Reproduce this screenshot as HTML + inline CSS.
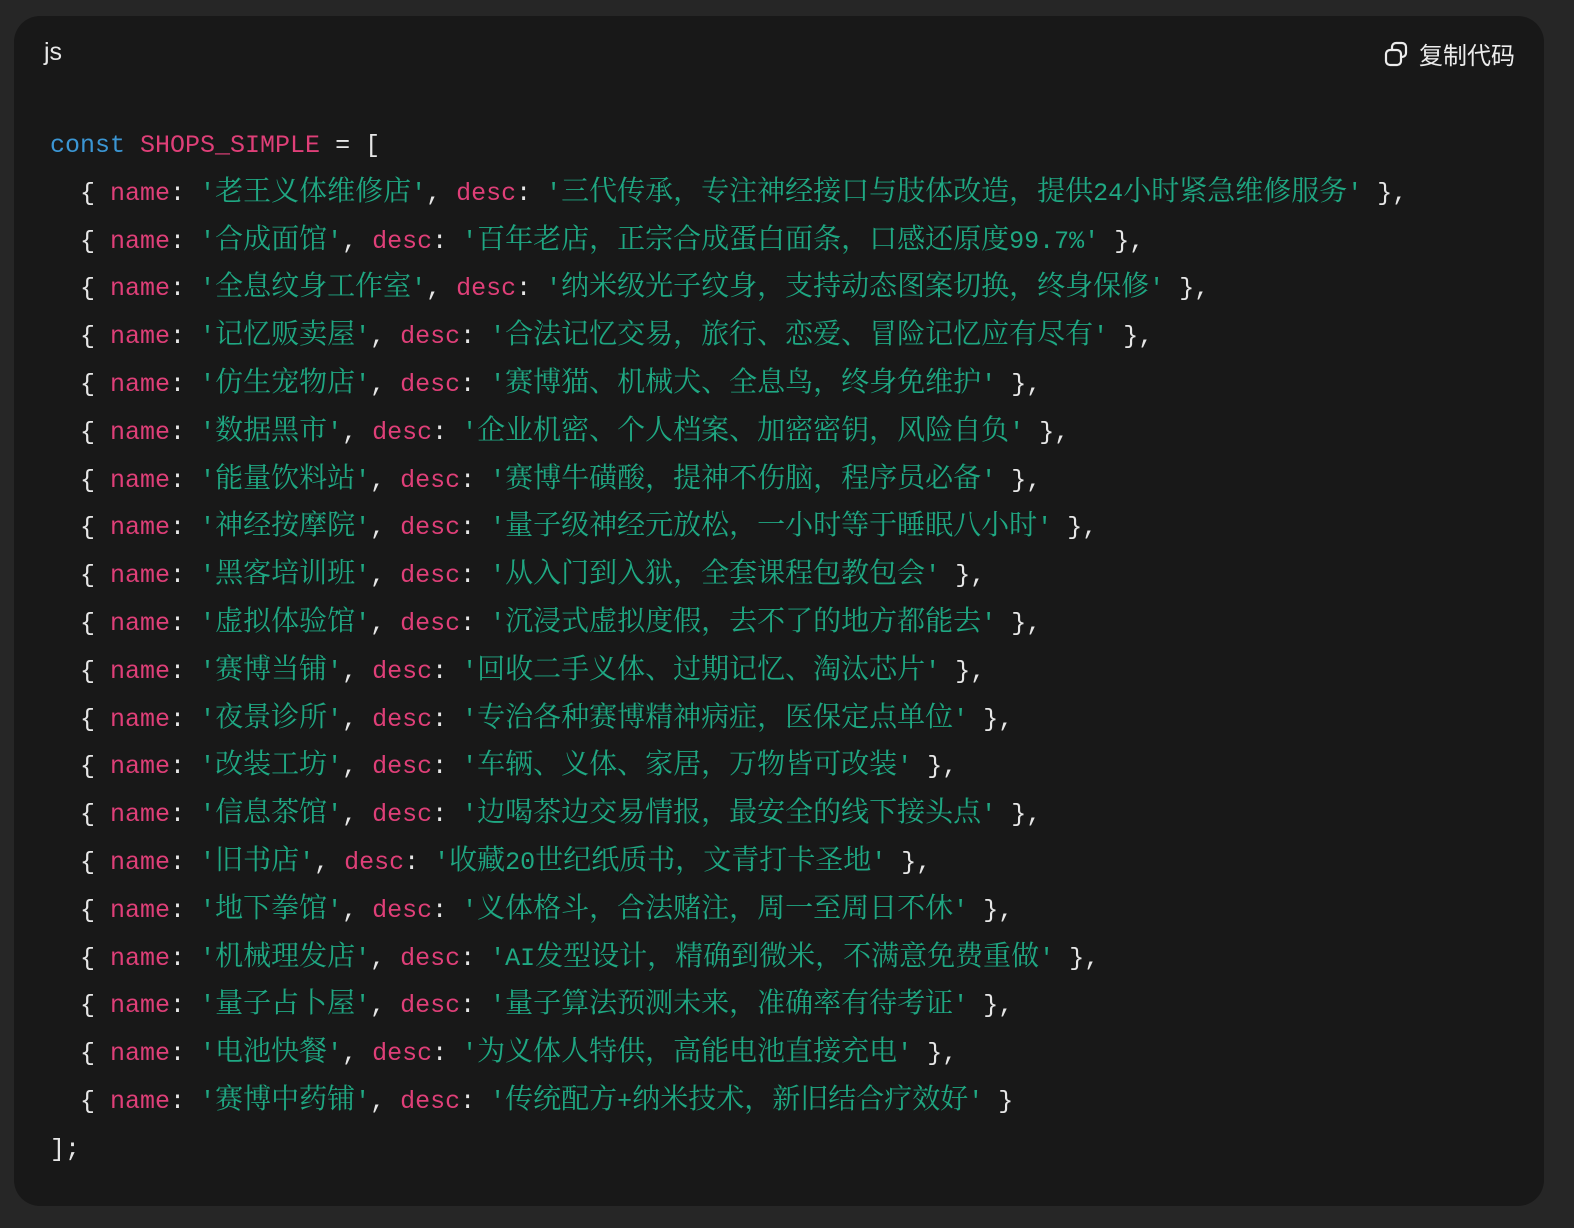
<!DOCTYPE html>
<html><head><meta charset="utf-8"><style>
html,body{margin:0;padding:0;background:#262626;width:1574px;height:1228px;overflow:hidden}
.card{position:absolute;left:14px;top:16px;width:1530px;height:1190px;background:#181818;border-radius:26px}
.lang{position:absolute;left:30px;top:22px;font:25px "Liberation Sans","Noto Sans CJK SC",sans-serif;color:#e8e8e8}
.copy{position:absolute;left:1370px;top:20px;font:24px "Liberation Sans","Noto Sans CJK SC",sans-serif;color:#ececec;display:flex;align-items:center;gap:9px}
pre{position:absolute;left:36px;top:106px;margin:0;font-family:"Liberation Mono",monospace;font-size:25px;line-height:47.8px;color:#e6e6e6}
.k{color:#3b96d4}.p{color:#df3f78}.s{color:#1fa883}
.c{font-family:"Noto Serif CJK SC","Noto Sans CJK SC",serif;font-size:28px;line-height:0}
</style></head><body>
<div class="card">
<div class="lang">js</div>
<div class="copy"><svg width="26" height="28" viewBox="0 0 26 28" fill="none" stroke="#ececec" stroke-width="2.2"><rect x="2" y="10" width="15" height="15" rx="4"/><path d="M8 10V7a4 4 0 0 1 4-4h6a4 4 0 0 1 4 4v6a4 4 0 0 1-4 4h-1"/></svg><span>复制代码</span></div>
<pre><span class="k">const</span> <span class="p">SHOPS_SIMPLE</span> = [
  { <span class="p">name</span>: <span class="s">'<span class="c">老王义体维修店</span>'</span>, <span class="p">desc</span>: <span class="s">'<span class="c">三代传承，专注神经接口与肢体改造，提供</span>24<span class="c">小时紧急维修服务</span>'</span> },
  { <span class="p">name</span>: <span class="s">'<span class="c">合成面馆</span>'</span>, <span class="p">desc</span>: <span class="s">'<span class="c">百年老店，正宗合成蛋白面条，口感还原度</span>99.7%'</span> },
  { <span class="p">name</span>: <span class="s">'<span class="c">全息纹身工作室</span>'</span>, <span class="p">desc</span>: <span class="s">'<span class="c">纳米级光子纹身，支持动态图案切换，终身保修</span>'</span> },
  { <span class="p">name</span>: <span class="s">'<span class="c">记忆贩卖屋</span>'</span>, <span class="p">desc</span>: <span class="s">'<span class="c">合法记忆交易，旅行、恋爱、冒险记忆应有尽有</span>'</span> },
  { <span class="p">name</span>: <span class="s">'<span class="c">仿生宠物店</span>'</span>, <span class="p">desc</span>: <span class="s">'<span class="c">赛博猫、机械犬、全息鸟，终身免维护</span>'</span> },
  { <span class="p">name</span>: <span class="s">'<span class="c">数据黑市</span>'</span>, <span class="p">desc</span>: <span class="s">'<span class="c">企业机密、个人档案、加密密钥，风险自负</span>'</span> },
  { <span class="p">name</span>: <span class="s">'<span class="c">能量饮料站</span>'</span>, <span class="p">desc</span>: <span class="s">'<span class="c">赛博牛磺酸，提神不伤脑，程序员必备</span>'</span> },
  { <span class="p">name</span>: <span class="s">'<span class="c">神经按摩院</span>'</span>, <span class="p">desc</span>: <span class="s">'<span class="c">量子级神经元放松，一小时等于睡眠八小时</span>'</span> },
  { <span class="p">name</span>: <span class="s">'<span class="c">黑客培训班</span>'</span>, <span class="p">desc</span>: <span class="s">'<span class="c">从入门到入狱，全套课程包教包会</span>'</span> },
  { <span class="p">name</span>: <span class="s">'<span class="c">虚拟体验馆</span>'</span>, <span class="p">desc</span>: <span class="s">'<span class="c">沉浸式虚拟度假，去不了的地方都能去</span>'</span> },
  { <span class="p">name</span>: <span class="s">'<span class="c">赛博当铺</span>'</span>, <span class="p">desc</span>: <span class="s">'<span class="c">回收二手义体、过期记忆、淘汰芯片</span>'</span> },
  { <span class="p">name</span>: <span class="s">'<span class="c">夜景诊所</span>'</span>, <span class="p">desc</span>: <span class="s">'<span class="c">专治各种赛博精神病症，医保定点单位</span>'</span> },
  { <span class="p">name</span>: <span class="s">'<span class="c">改装工坊</span>'</span>, <span class="p">desc</span>: <span class="s">'<span class="c">车辆、义体、家居，万物皆可改装</span>'</span> },
  { <span class="p">name</span>: <span class="s">'<span class="c">信息茶馆</span>'</span>, <span class="p">desc</span>: <span class="s">'<span class="c">边喝茶边交易情报，最安全的线下接头点</span>'</span> },
  { <span class="p">name</span>: <span class="s">'<span class="c">旧书店</span>'</span>, <span class="p">desc</span>: <span class="s">'<span class="c">收藏</span>20<span class="c">世纪纸质书，文青打卡圣地</span>'</span> },
  { <span class="p">name</span>: <span class="s">'<span class="c">地下拳馆</span>'</span>, <span class="p">desc</span>: <span class="s">'<span class="c">义体格斗，合法赌注，周一至周日不休</span>'</span> },
  { <span class="p">name</span>: <span class="s">'<span class="c">机械理发店</span>'</span>, <span class="p">desc</span>: <span class="s">'AI<span class="c">发型设计，精确到微米，不满意免费重做</span>'</span> },
  { <span class="p">name</span>: <span class="s">'<span class="c">量子占卜屋</span>'</span>, <span class="p">desc</span>: <span class="s">'<span class="c">量子算法预测未来，准确率有待考证</span>'</span> },
  { <span class="p">name</span>: <span class="s">'<span class="c">电池快餐</span>'</span>, <span class="p">desc</span>: <span class="s">'<span class="c">为义体人特供，高能电池直接充电</span>'</span> },
  { <span class="p">name</span>: <span class="s">'<span class="c">赛博中药铺</span>'</span>, <span class="p">desc</span>: <span class="s">'<span class="c">传统配方</span>+<span class="c">纳米技术，新旧结合疗效好</span>'</span> }
];</pre>
</div>
</body></html>
